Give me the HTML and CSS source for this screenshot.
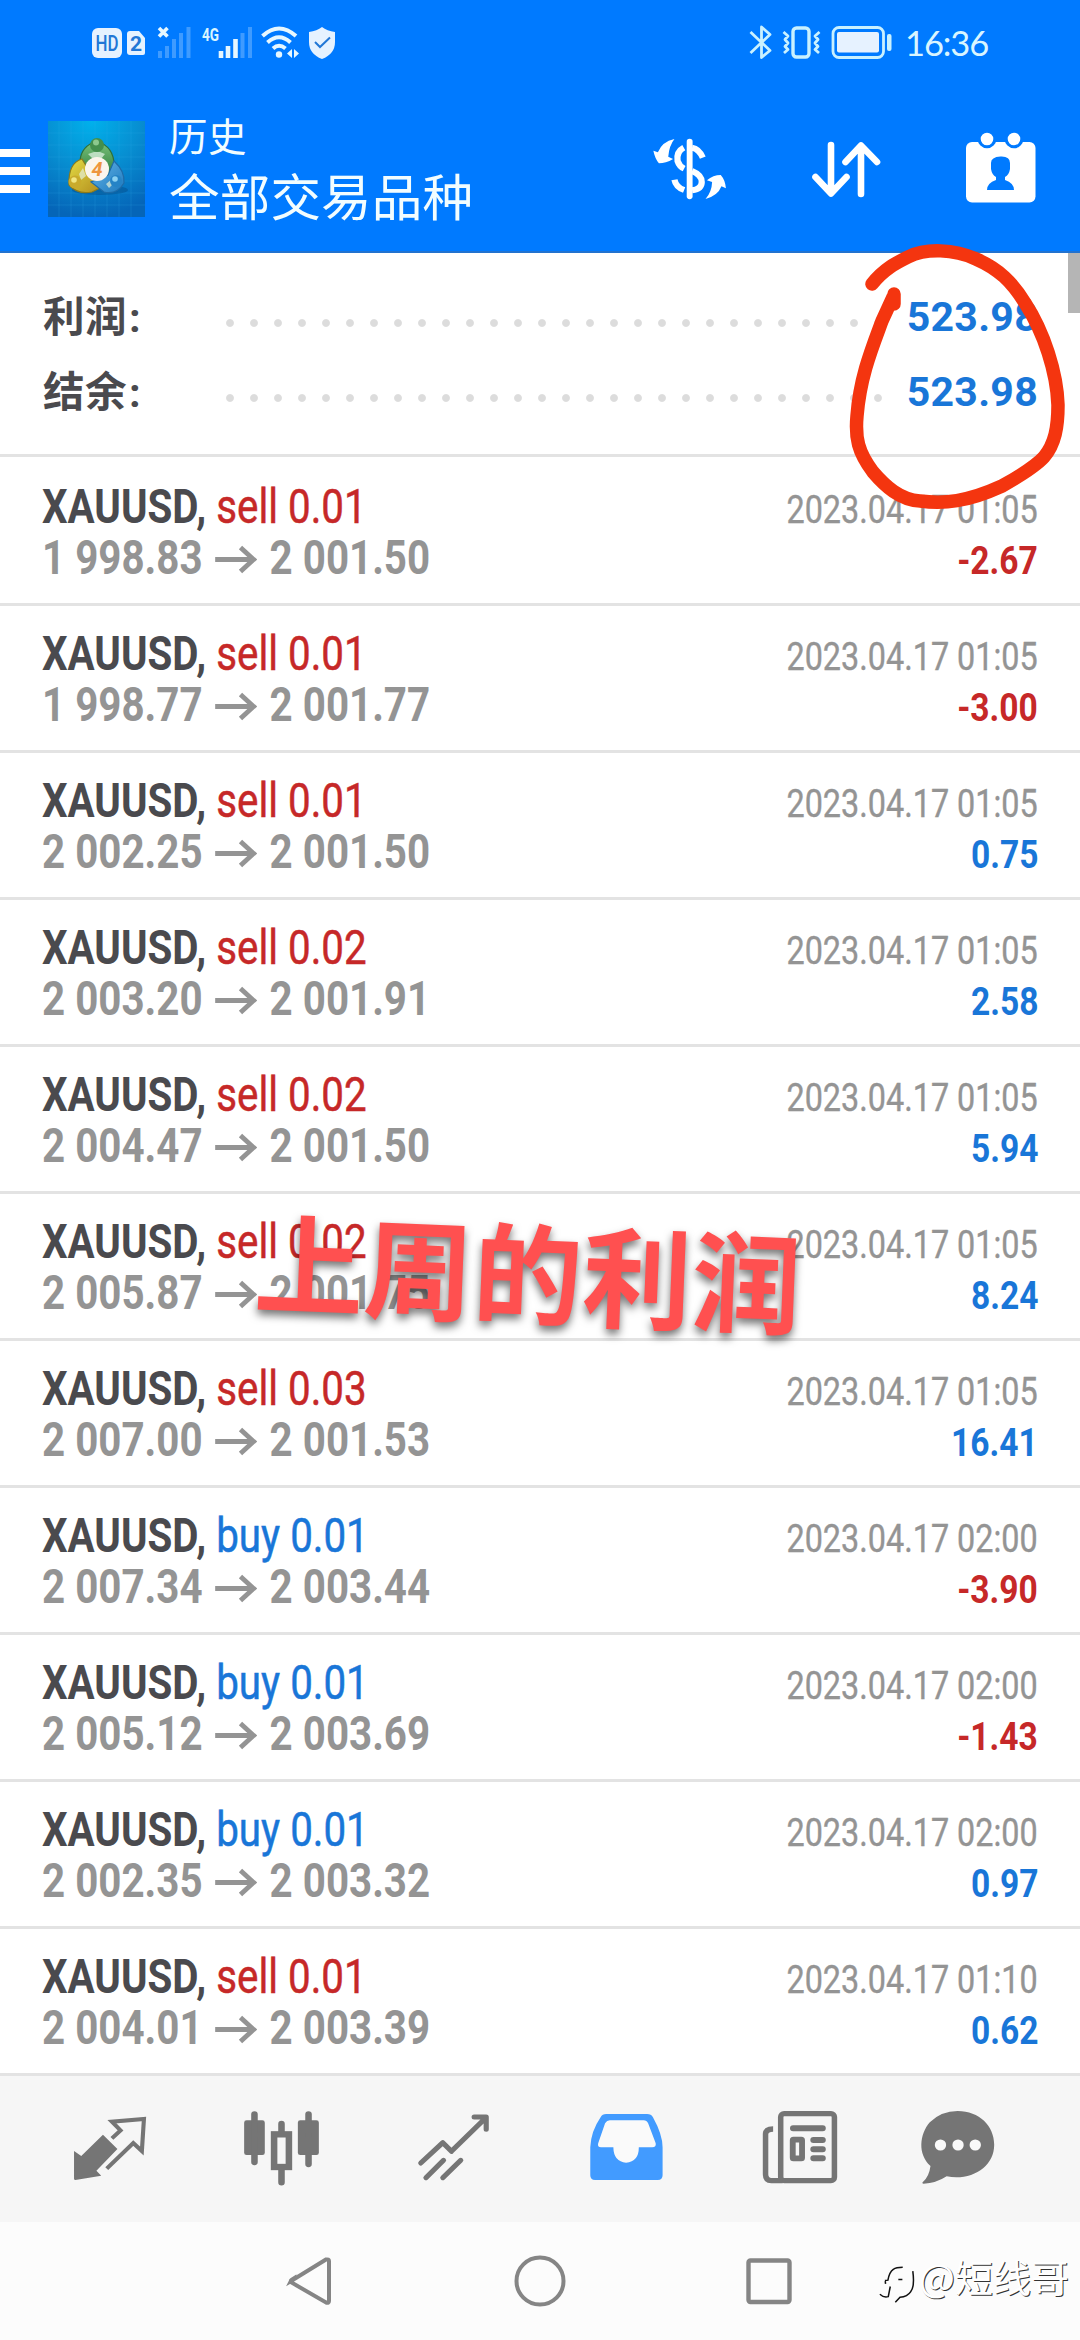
FILE: index.html
```html
<!DOCTYPE html>
<html lang="zh-CN">
<head>
<meta charset="utf-8">
<title>历史</title>
<link rel="stylesheet" href="styles.css">
</head>
<body>
<div class="screen">
<header class="header">
  <div class="status">
    <svg class="status-left" viewBox="85 20 260 45" width="260" height="45">
      <rect x="92" y="28" width="30" height="30" rx="6" fill="#e6f2ff"/>
      <text x="107" y="50.500" class="hd-text" textLength="23" lengthAdjust="spacingAndGlyphs">HD</text>
      <path d="M130 31h9l6 7v15q0 2-2 2h-13q-3 0-3-3V34q0-3 3-3z" fill="#e6f2ff"/>
      <text x="136" y="50.500" class="sim-text">2</text>
      <path d="M159 28l8.500 8.500M167.500 28l-8.500 8.500" stroke="#e6f7ff" stroke-width="3.600"/>
      <path d="M160 58v-7M167 58V46M174 58V39M181 58V33M188.500 58V27" stroke="#3f9bff" stroke-width="4"/>
      <text x="202" y="40.500" class="net-text" textLength="17" lengthAdjust="spacingAndGlyphs">4G</text>
      <path d="M221 58v-7M228 58V46M235.500 58V39" stroke="#e6f7ff" stroke-width="4.600"/>
      <path d="M242.500 58V33M250 58V27" stroke="#3f9bff" stroke-width="4"/>
      <g fill="none" stroke="#e6f7ff" stroke-width="4"><path d="M262.500 36q16.500-15 33.500 0M267.500 42.500q11.500-10.500 23 0M273 48.500q6-5.500 12.500 0"/></g>
      <circle cx="279" cy="54.500" r="3.200" fill="#e6f7ff"/>
      <path d="M292 49v9l-5-4.500zM294 49v9l5-4.500z" fill="#e6f7ff"/>
      <path d="M322 27q5 4 13 5v10q0 12-13 17q-13-5-13-17V32q8-1 13-5z" fill="#e6f2ff"/>
      <path d="M315 42l5 5 10-9.500" fill="none" stroke="#2277d6" stroke-width="2"/>
    </svg>
    <svg class="status-right" viewBox="745 20 150 45" width="150" height="45">
      <g fill="none" stroke="#c9f1ff" stroke-width="2.800" stroke-linejoin="round">
      <path d="M750.500 32L770 50.500l-8.500 7V27L770 34.500 750.500 53"/>
      <rect x="793" y="28" width="16" height="29" rx="3.500" stroke-width="3.400"/>
      <path d="M783.500 32l4.500 4-3 3.500 3 3.500-3 3.500 3 3-4 3.500M819.500 32l-4.500 4 3 3.500-3 3.500 3 3.500-3 3 4 3.500"/>
      <rect x="833" y="27.500" width="50.500" height="30" rx="6"/></g>
      <rect x="837" y="32" width="42" height="20.500" rx="2" fill="#e6f2ff"/>
      <rect x="887" y="34" width="4.500" height="17" rx="2" fill="#c9f1ff"/>
    </svg>
    <span class="clock">16:36</span>
  </div>
  <div class="appbar">
    <svg class="menu" viewBox="0 145 30 52" width="30" height="52"><path d="M0 153h30M0 171h30M0 189h30" stroke="#fff" stroke-width="8"/></svg>
    <svg class="logo" viewBox="0 0 97 96" width="97" height="96">
      <defs>
        <radialGradient id="bg" cx=".45" cy="0" r="1"><stop offset="0" stop-color="#00b1ec"/><stop offset=".5" stop-color="#078ed1"/><stop offset="1" stop-color="#0565b8"/></radialGradient>
        <linearGradient id="green" x2="0" y2="1"><stop stop-color="#7cc47c"/><stop offset="1" stop-color="#2d7d3e"/></linearGradient>
        <linearGradient id="gold" x2="1" y2="1"><stop stop-color="#e3dc45"/><stop offset="1" stop-color="#b28b1c"/></linearGradient>
        <linearGradient id="blue" x2="1" y2="1"><stop stop-color="#66b5e8"/><stop offset="1" stop-color="#1c79be"/></linearGradient>
      </defs>
      <rect width="97" height="96" fill="url(#bg)"/>
      <path d="M11 0v96M23 0v96M35 0v96M47 0v96M59 0v96M71 0v96M83 0v96M0 12h97M0 24h97M0 36h97M0 48h97M0 60h97M0 72h97M0 84h97" stroke="#35a9e6" stroke-opacity=".2"/>
      <ellipse cx="52" cy="69" rx="28" ry="5" fill="#044f8e" opacity=".5"/>
      <path d="M49 20Q66 26 66 44L62 54 36 50 32 40Q33 25 49 20z" fill="url(#green)" stroke="#2f7038" stroke-width="1.200"/>
      <path d="M34 38Q20 42 21 64 30 74 44 71L54 66 40 48z" fill="url(#gold)" stroke="#8a7a1c" stroke-width="1.200"/>
      <path d="M66 40Q77 50 76 62 69 74 56 71L43 61 60 54z" fill="url(#blue)" stroke="#1d6ba8" stroke-width="1.200"/>
      <path d="M40 33l5 5h8l4-5-5-2h-6z" fill="#d4ecd8" opacity=".8"/>
      <path d="M31 53l4-6 3 8-5 4zM58 63l6-5 2 4-5 5z" fill="#e6f1d8" opacity=".7"/>
      <circle cx="49" cy="24" r="7" fill="#448f4d"/><circle cx="48" cy="21.500" r="3" fill="#8cc88d"/>
      <circle cx="27" cy="61" r="6.500" fill="#c9ab2c"/><circle cx="26" cy="59" r="2.800" fill="#f1e681"/>
      <circle cx="68" cy="60" r="6" fill="#2583c6"/><circle cx="67" cy="58" r="2.800" fill="#8bd0f1"/>
      <circle cx="49" cy="48" r="12" fill="#fbf5ed"/>
      <text x="49" y="55" class="logo-four">4</text>
    </svg>
    <div class="titles"><div class="title-small">历史</div><div class="title-large">全部交易品种</div></div>
    <svg class="ic-dollar" viewBox="326 411 220 192" preserveAspectRatio="none" width="76" height="64">
      <g fill="none" stroke="#fff" stroke-width="18">
        <path d="M435 425V589" stroke-linecap="round" stroke-width="17"/>
        <path d="M418 443q-22 12-18 40q5 16 19 23M391 539q4 22 28 31M442 443q20 3 31 30M442 513q28 12 28 33t-28 25"/></g>
      <path d="M391 417q-36 8-48 40l-13-5q4 22 16 38q20 0 41-13l-14-7q3-34 18-53zM481 597q36-10 46-38l13 6q-2-25-15-40q-22 0-40 16l15 5q-1 30-19 51z" fill="#fff"/>
    </svg>
    <svg class="ic-sort" viewBox="812 138 70 62" width="70" height="62"><path d="M831 145v48M815.500 177L831 193.500 846.500 177M861 194v-48M845.500 162L861 145.500 877 162" fill="none" stroke="#fff" stroke-width="6.600" stroke-linecap="round" stroke-linejoin="round"/></svg>
    <svg class="ic-cal" viewBox="964 130 74 74" width="74" height="74">
      <rect x="966" y="142" width="69.500" height="60.500" rx="6" fill="#fff"/>
      <g fill="#fff" stroke="#007aff" stroke-width="3"><circle cx="987" cy="139" r="7.800"/><circle cx="1014" cy="139" r="7.800"/></g>
      <path d="M991 163q0-6 9.500-6.500t9.500 6.500v6q-1 6-5 8v3q9 3 9 10h-27q0-7 9-10v-3q-4-2-5-8z" fill="#007aff"/>
    </svg>
  </div>
</header>

<section class="summary">
  <div class="sum-row"><span class="sum-label">利润<span class="colon">:</span></span><span class="dots"></span><span class="sum-value">523.98</span></div>
  <div class="sum-row"><span class="sum-label">结余<span class="colon">:</span></span><span class="dots"></span><span class="sum-value">523.98</span></div>
</section>

<svg class="defs" width="0" height="0"><symbol id="arrow" viewBox="0 0 44 30" preserveAspectRatio="none"><path d="M1 15H40M27 2.500L40.500 15 27 27.500" fill="none" stroke="#949494" stroke-width="5"/></symbol></svg>

<main class="trades">
  <article class="trade"><div class="line"><span class="name"><b>XAUUSD,</b> <i class="sell">sell 0.01</i></span><span class="date">2023.04.17 01:05</span></div><div class="line"><span class="price">1 998.83 <svg class="arrow"><use href="#arrow"/></svg> 2 001.50</span><span class="value sell">-2.67</span></div></article>
  <article class="trade"><div class="line"><span class="name"><b>XAUUSD,</b> <i class="sell">sell 0.01</i></span><span class="date">2023.04.17 01:05</span></div><div class="line"><span class="price">1 998.77 <svg class="arrow"><use href="#arrow"/></svg> 2 001.77</span><span class="value sell">-3.00</span></div></article>
  <article class="trade"><div class="line"><span class="name"><b>XAUUSD,</b> <i class="sell">sell 0.01</i></span><span class="date">2023.04.17 01:05</span></div><div class="line"><span class="price">2 002.25 <svg class="arrow"><use href="#arrow"/></svg> 2 001.50</span><span class="value buy">0.75</span></div></article>
  <article class="trade"><div class="line"><span class="name"><b>XAUUSD,</b> <i class="sell">sell 0.02</i></span><span class="date">2023.04.17 01:05</span></div><div class="line"><span class="price">2 003.20 <svg class="arrow"><use href="#arrow"/></svg> 2 001.91</span><span class="value buy">2.58</span></div></article>
  <article class="trade"><div class="line"><span class="name"><b>XAUUSD,</b> <i class="sell">sell 0.02</i></span><span class="date">2023.04.17 01:05</span></div><div class="line"><span class="price">2 004.47 <svg class="arrow"><use href="#arrow"/></svg> 2 001.50</span><span class="value buy">5.94</span></div></article>
  <article class="trade"><div class="line"><span class="name"><b>XAUUSD,</b> <i class="sell">sell 0.02</i></span><span class="date">2023.04.17 01:05</span></div><div class="line"><span class="price">2 005.87 <svg class="arrow"><use href="#arrow"/></svg> 2 001.75</span><span class="value buy">8.24</span></div></article>
  <article class="trade"><div class="line"><span class="name"><b>XAUUSD,</b> <i class="sell">sell 0.03</i></span><span class="date">2023.04.17 01:05</span></div><div class="line"><span class="price">2 007.00 <svg class="arrow"><use href="#arrow"/></svg> 2 001.53</span><span class="value buy">16.41</span></div></article>
  <article class="trade"><div class="line"><span class="name"><b>XAUUSD,</b> <i class="buy">buy 0.01</i></span><span class="date">2023.04.17 02:00</span></div><div class="line"><span class="price">2 007.34 <svg class="arrow"><use href="#arrow"/></svg> 2 003.44</span><span class="value sell">-3.90</span></div></article>
  <article class="trade"><div class="line"><span class="name"><b>XAUUSD,</b> <i class="buy">buy 0.01</i></span><span class="date">2023.04.17 02:00</span></div><div class="line"><span class="price">2 005.12 <svg class="arrow"><use href="#arrow"/></svg> 2 003.69</span><span class="value sell">-1.43</span></div></article>
  <article class="trade"><div class="line"><span class="name"><b>XAUUSD,</b> <i class="buy">buy 0.01</i></span><span class="date">2023.04.17 02:00</span></div><div class="line"><span class="price">2 002.35 <svg class="arrow"><use href="#arrow"/></svg> 2 003.32</span><span class="value buy">0.97</span></div></article>
  <article class="trade"><div class="line"><span class="name"><b>XAUUSD,</b> <i class="sell">sell 0.01</i></span><span class="date">2023.04.17 01:10</span></div><div class="line"><span class="price">2 004.01 <svg class="arrow"><use href="#arrow"/></svg> 2 003.39</span><span class="value buy">0.62</span></div></article>
</main>

<nav class="tabs">
  <svg class="tab" viewBox="69.700 48 499.500 438" preserveAspectRatio="none">
    <path d="M299 224L341 267 280 332 294 347 219 360Q215 360 215 356V273L236 288z" fill="#757575"/>
    <path d="M325 235L350 211 325 185 418 177 412 273 387 249 310 326" fill="none" stroke="#757575" stroke-width="12"/>
  </svg>
  <svg class="tab" viewBox="569.200 48 499.500 438" preserveAspectRatio="none">
    <g fill="#757575"><rect x="709" y="181" width="60" height="104" rx="7"/><rect x="865" y="181" width="61" height="104" rx="7"/></g>
    <g fill="none" stroke="#757575" stroke-width="19"><path d="M739 163V306M896 163V312M817.500 192V220M817.500 325V367" stroke-linecap="round"/><rect x="796" y="223" width="43" height="98"/></g>
  </svg>
  <svg class="tab" viewBox="1068.700 48 499.500 438" preserveAspectRatio="none">
    <g fill="none" stroke="#757575" stroke-width="15" stroke-linecap="round" stroke-linejoin="round"><path d="M1222 309L1286 248 1311 274 1411 173M1377 171H1412V208M1237 353L1288 301M1286 353L1338 301"/></g>
  </svg>
  <svg class="tab" viewBox="0 48 499.500 438" preserveAspectRatio="none">
    <path d="M192 162H311Q323 162 328 172Q356 224 356 262V346Q356 360 342 360H160Q146 360 146 346V262Q148 214 176 172Q181 162 192 162z" fill="#429bff"/>
    <path d="M203 181H301Q310 181 314 190L336 250Q338 262 326 262H287Q287 306 250 308Q214 306 213 262H177Q166 262 169 250L189 190Q194 181 203 181z" fill="#fafafa"/>
  </svg>
  <svg class="tab" viewBox="499.500 48 499.500 438" preserveAspectRatio="none">
    <g fill="none" stroke="#757575" stroke-width="16"><rect x="699" y="161" width="156" height="201" rx="10"/><path d="M677 207Q655 207 655 223V343Q655 362 672 362H705"/></g>
    <g stroke="#757575" stroke-width="18" stroke-linecap="round"><path d="M735 205H821M794 240H821M794 268H821M794 295H821"/></g>
    <rect x="734" y="239" width="27" height="56" rx="2" fill="none" stroke="#757575" stroke-width="17"/>
  </svg>
  <svg class="tab" viewBox="999 48 499.500 438" preserveAspectRatio="none">
    <path d="M1213 153C1276 153 1319 198 1319 254C1319 320 1255 363 1181 349Q1150 370 1114 371Q1108 370 1112 366Q1130 350 1134 318C1096 283 1102 223 1132 187Q1165 153 1213 153z" fill="#757575"/>
    <g fill="#fafafa"><circle cx="1163" cy="255" r="16.500"/><circle cx="1214" cy="255" r="16.500"/><circle cx="1264" cy="255" r="16.500"/></g>
  </svg>
</nav>
<footer class="sysnav">
  <svg viewBox="283 2255 54 52" width="54" height="52"><path d="M290 2281L325 2259.500Q328 2259 328 2261V2301Q328 2303.500 325 2302.500L290.500 2282.500Q289 2281 290.500 2280z" fill="none" stroke="#858585" stroke-width="4"/></svg>
  <svg viewBox="513 2255 54 52" width="54" height="52"><circle cx="540" cy="2281" r="23.500" fill="none" stroke="#858585" stroke-width="4"/></svg>
  <svg viewBox="742 2255 54 52" width="54" height="52"><rect x="748.500" y="2260.500" width="41" height="41.500" rx="2" fill="none" stroke="#858585" stroke-width="4.400"/></svg>
</footer>

<div class="scrollbar"></div>
<svg class="circle" viewBox="845 240 225 275" width="225" height="275"><path d="M872 284C884 269 896 263 908 257C926 248 954 249 976 259C999 269 1012 282 1025 303C1044 332 1057 373 1058 405C1058 427 1055 444 1044 457Q1034 468 1002 486C967 502 944 504 920 501C900 500 885 486 873 472C858 452 855 438 857 416C860 377 872 348 882 321L893 297M894 294L894 304" fill="none" stroke="#f4350f" stroke-width="13.500" stroke-linecap="round" stroke-linejoin="round"/></svg>
<div class="caption">上周的利润</div>
<div class="watermark">
  <svg viewBox="598 496 106 116" width="36" height="39"><path d="M615 542L624 541C630 506 646 503 668 503M698 514Q704 560 692 575Q682 590 660 592L646 607M616 544L617 552M600 583Q612 594 625 590L631 560M655 539L667 539" fill="none" stroke="#111" stroke-width="4.500"/></svg>
  <span>@短线哥</span>
</div>
</div>
</body>
</html>
```
FILE: styles.css
```css
body { margin: 0; background: #fff; font-family: Roboto, "Noto Sans CJK SC", sans-serif; }
svg { display: block; flex: none; }
.screen { position: relative; width: 1080px; height: 2340px; overflow: hidden; display: flex; flex-direction: column; }
.defs { position: absolute; }

.header { box-sizing: border-box; flex: none; height: 253px; background: #007aff; border-bottom: 2px solid #2272cf; }
.status { display: flex; padding: 20px 0 0 85px; height: 45px; }
.status-right { margin-left: 400px; }
.clock { margin-left: 10px; font: 34.5px/46px Lato, sans-serif; letter-spacing: -1.1px; color: #d9f5ff; }
.hd-text { font: 500 22px Roboto, sans-serif; fill: #2277d6; text-anchor: middle; }
.sim-text { font: bold 21px Roboto, sans-serif; fill: #2277d6; text-anchor: middle; }
.net-text { font: bold 18px Roboto, sans-serif; fill: #d9f5ff; }

.appbar { display: flex; align-items: flex-start; padding-top: 48px; }
.menu { margin-top: 32px; }
.logo { margin: 8px 0 0 18px; }
.logo-four { font: italic bold 20px Roboto, sans-serif; fill: #ee963e; text-anchor: middle; }
.titles { width: 480px; margin-left: 24px; color: #f2fdff; font-family: "Noto Sans CJK SC", sans-serif; white-space: nowrap; }
.title-small { font-size: 38.5px; line-height: 43px; letter-spacing: 0.5px; }
.title-large { font-size: 50.5px; line-height: 77px; letter-spacing: 0.2px; }
.ic-dollar { margin: 24px 0 0 3px; }
.ic-sort { margin: 25px 0 0 84px; }
.ic-cal { margin: 17px 0 0 82px; }

.summary { box-sizing: border-box; flex: none; height: 204px; padding: 27px 42px 0 43px; border-bottom: 3px solid #e3e3e3; }
.sum-row { display: flex; align-items: center; height: 75px; }
.sum-label { width: 175px; font: bold 41.5px/75px Roboto, "Noto Sans CJK SC", sans-serif; letter-spacing: 0.5px; color: #4a4a4e; }
.colon { margin-left: 2px; }
.dots { width: 672px; height: 24px; background: radial-gradient(circle, #dcdcdc 3.4px, transparent 4.4px) 0 5px / 24px 24px; }
.sum-value { flex: 1; text-align: right; font: bold 41px/75px Roboto, sans-serif; letter-spacing: 0.3px; color: #1976d8; }

.trades { flex: none; padding-top: 2px; }
.trade { box-sizing: border-box; height: 147px; padding: 22px 42px 0 42px; border-bottom: 3px solid #e3e3e3; }
.line { display: flex; justify-content: space-between; align-items: baseline; height: 51px; line-height: 51px; white-space: nowrap; }
.name, .price { font-size: 48px; transform: scaleX(.84); transform-origin: left; }
.name b { font-weight: 700; color: #4a4a4e; }
.name i { font-style: normal; -webkit-text-stroke: 0.5px currentColor; }
.price { font-weight: 700; color: #949494; }
.date { font-size: 39px; color: #949494; transform: scaleX(.83); transform-origin: right; -webkit-text-stroke: 0.4px currentColor; }
.value { font-size: 39px; font-weight: 700; transform: scaleX(.86); transform-origin: right; }
.sell { color: #c62828; }
.buy { color: #1976d8; }
.arrow { display: inline-block; width: 51px; height: 29px; margin: 0 3px 0 2px; vertical-align: 0; }

.tabs { flex: none; height: 146px; padding: 0 24px; display: grid; grid-template-columns: repeat(6, 172px); background: #f6f6f6; }
.tab { width: 172px; height: 146px; }
.sysnav { flex: 1; display: flex; justify-content: center; gap: 175px; padding-top: 33px; background: #fcfcfc; }

.scrollbar { position: absolute; left: 1068px; top: 253px; width: 12px; height: 60px; background: #b5b5b5; }
.circle { position: absolute; left: 845px; top: 240px; }
.caption { position: absolute; left: 255px; top: 1188px; font: bold 109.3px/160px "Noto Sans CJK SC", sans-serif; color: #ff5050; white-space: nowrap; transform: rotate(2.3deg); text-shadow: 0 5px 8px rgba(0,0,0,.55); }
.watermark { position: absolute; left: 879px; top: 2254px; display: flex; align-items: flex-start; gap: 4px; font: 38px/44px "Noto Sans CJK SC", sans-serif; color: #fff; text-shadow: 1px 1px 0 #333; white-space: nowrap; }
.watermark svg { margin-top: 11px; }
```
